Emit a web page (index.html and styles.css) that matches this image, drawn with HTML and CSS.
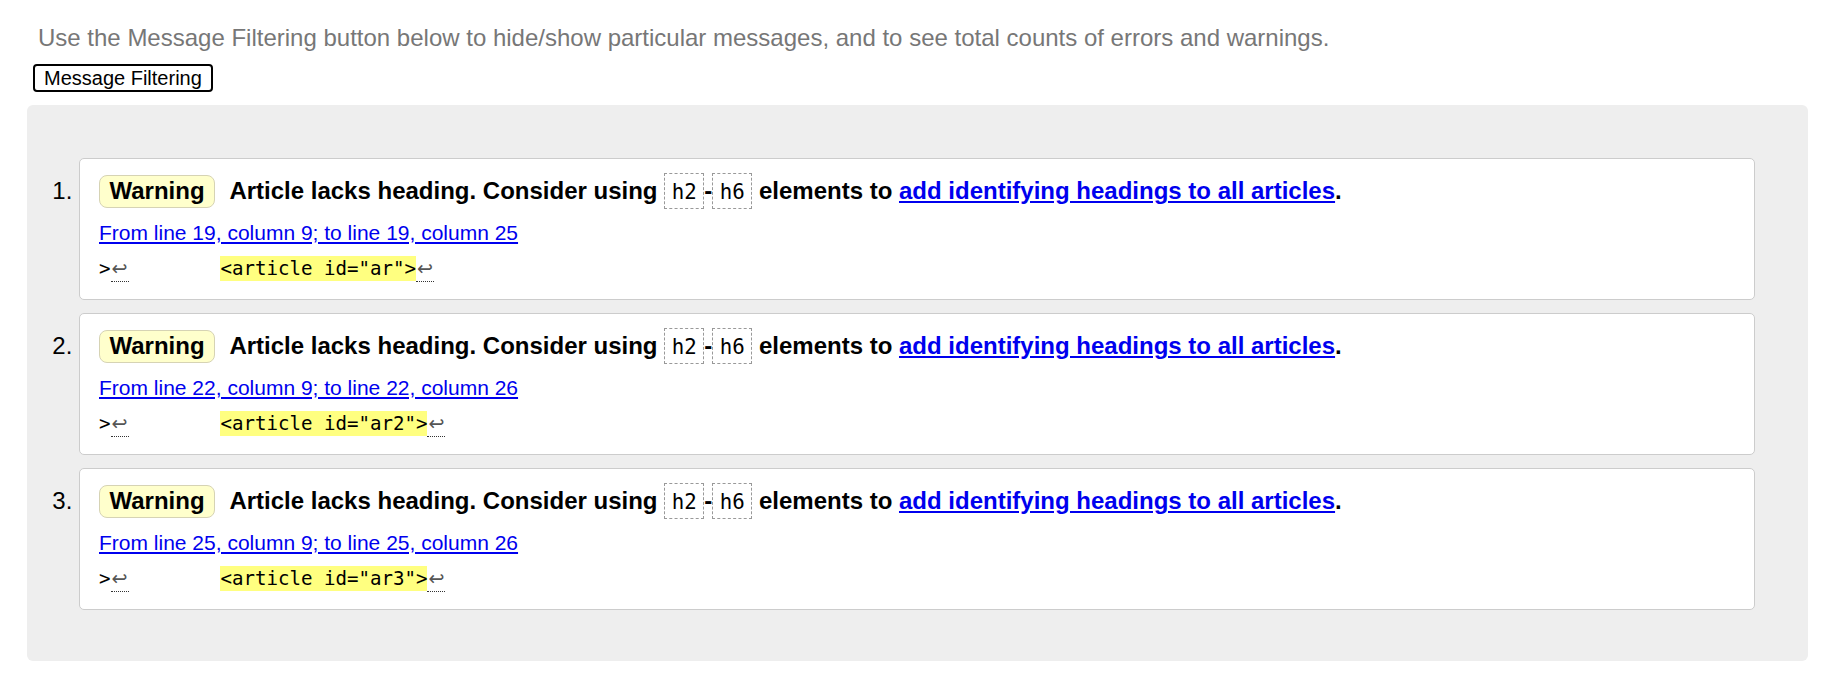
FILE: index.html
```html
<!DOCTYPE html>
<html lang="en">
<head>
<meta charset="utf-8">
<title>Nu Html Checker results</title>
<link rel="stylesheet" href="styles.css">
</head>
<body>
<p class="intro">Use the Message Filtering button below to hide/show particular messages, and to see total counts of errors and warnings.</p>
<button class="filter-btn" type="button">Message Filtering</button>
<div class="results">
  <ol class="messages">
    <li class="card">
      <p class="msg"><span class="badge">Warning</span> Article lacks heading. Consider using <code class="tag">h2</code>-<code class="tag">h6</code> elements to <a href="#">add identifying headings to all articles</a>.</p>
      <p class="loc"><a href="#">From line 19, column 9; to line 19, column 25</a></p>
      <p class="extract">&gt;<span class="lf">↩</span>        <b class="hl">&lt;article id="ar"&gt;</b><span class="lf">↩</span></p>
    </li>
    <li class="card">
      <p class="msg"><span class="badge">Warning</span> Article lacks heading. Consider using <code class="tag">h2</code>-<code class="tag">h6</code> elements to <a href="#">add identifying headings to all articles</a>.</p>
      <p class="loc"><a href="#">From line 22, column 9; to line 22, column 26</a></p>
      <p class="extract">&gt;<span class="lf">↩</span>        <b class="hl">&lt;article id="ar2"&gt;</b><span class="lf">↩</span></p>
    </li>
    <li class="card">
      <p class="msg"><span class="badge">Warning</span> Article lacks heading. Consider using <code class="tag">h2</code>-<code class="tag">h6</code> elements to <a href="#">add identifying headings to all articles</a>.</p>
      <p class="loc"><a href="#">From line 25, column 9; to line 25, column 26</a></p>
      <p class="extract">&gt;<span class="lf">↩</span>        <b class="hl">&lt;article id="ar3"&gt;</b><span class="lf">↩</span></p>
    </li>
  </ol>
</div>
</body>
</html>
```

FILE: styles.css
```css
html, body {
  background: #ffffff;
}

body {
  margin: 0;
  padding: 0 22px 0 27px;
  font-family: "Liberation Sans", Arial, sans-serif;
  color: #000;
}

.intro {
  margin: 24px 0 0 11px;
  font-size: 24px;
  line-height: 27.2px;
  color: #777777;
}

.filter-btn {
  display: block;
  margin: 12.8px 0 0 6px;
  height: 28px;
  padding: 0 9px;
  border: 2px solid #000;
  border-radius: 4px;
  background: #fff;
  font-family: "Liberation Sans", Arial, sans-serif;
  font-size: 20px;
  line-height: 24px;
  color: #000;
}

.results {
  margin-top: 13px;
  background: #eeeeee;
  border-radius: 6px;
}

.messages {
  margin: 0;
  padding: 53px 53px 51px 52px;
  font-size: 24px;
  list-style: decimal outside;
}

.card {
  background: #fff;
  border: 1px solid #cccccc;
  border-radius: 5px;
  padding: 14.3px 19px 17.6px 19px;
}

.card + .card {
  margin-top: 13px;
}

.msg {
  margin: 0;
  font-weight: bold;
  line-height: 20px;
}

.badge {
  display: inline-block;
  margin-right: 8.5px;
  padding: 1px 9.5px 2px;
  line-height: 28px;
  background: #ffffcc;
  border: 1px solid #d6d3b4;
  border-radius: 8px;
}

.tag {
  display: inline-block;
  padding: 5.5px 6.5px 4.5px;
  line-height: 24px;
  border: 1px dashed #999999;
  font-family: "DejaVu Sans Mono", monospace;
  font-size: 20.8px;
  font-weight: normal;
}

a {
  color: #0000ee;
  text-decoration: underline;
}

.loc {
  margin: 11.4px 0 0;
  font-size: 21px;
  line-height: 24px;
}

.extract {
  margin: 12.7px 0 0;
  white-space: pre;
  font-family: "DejaVu Sans Mono", monospace;
  font-size: 19.1px;
  line-height: 24px;
}

.hl {
  font-weight: normal;
  background: #ffff80;
  padding: 1px 0;
}

.lf {
  font-family: "DejaVu Sans", sans-serif;
  color: #555555;
  padding: 0 1px 1px;
  border-bottom: 1px dotted #333333;
}
```
